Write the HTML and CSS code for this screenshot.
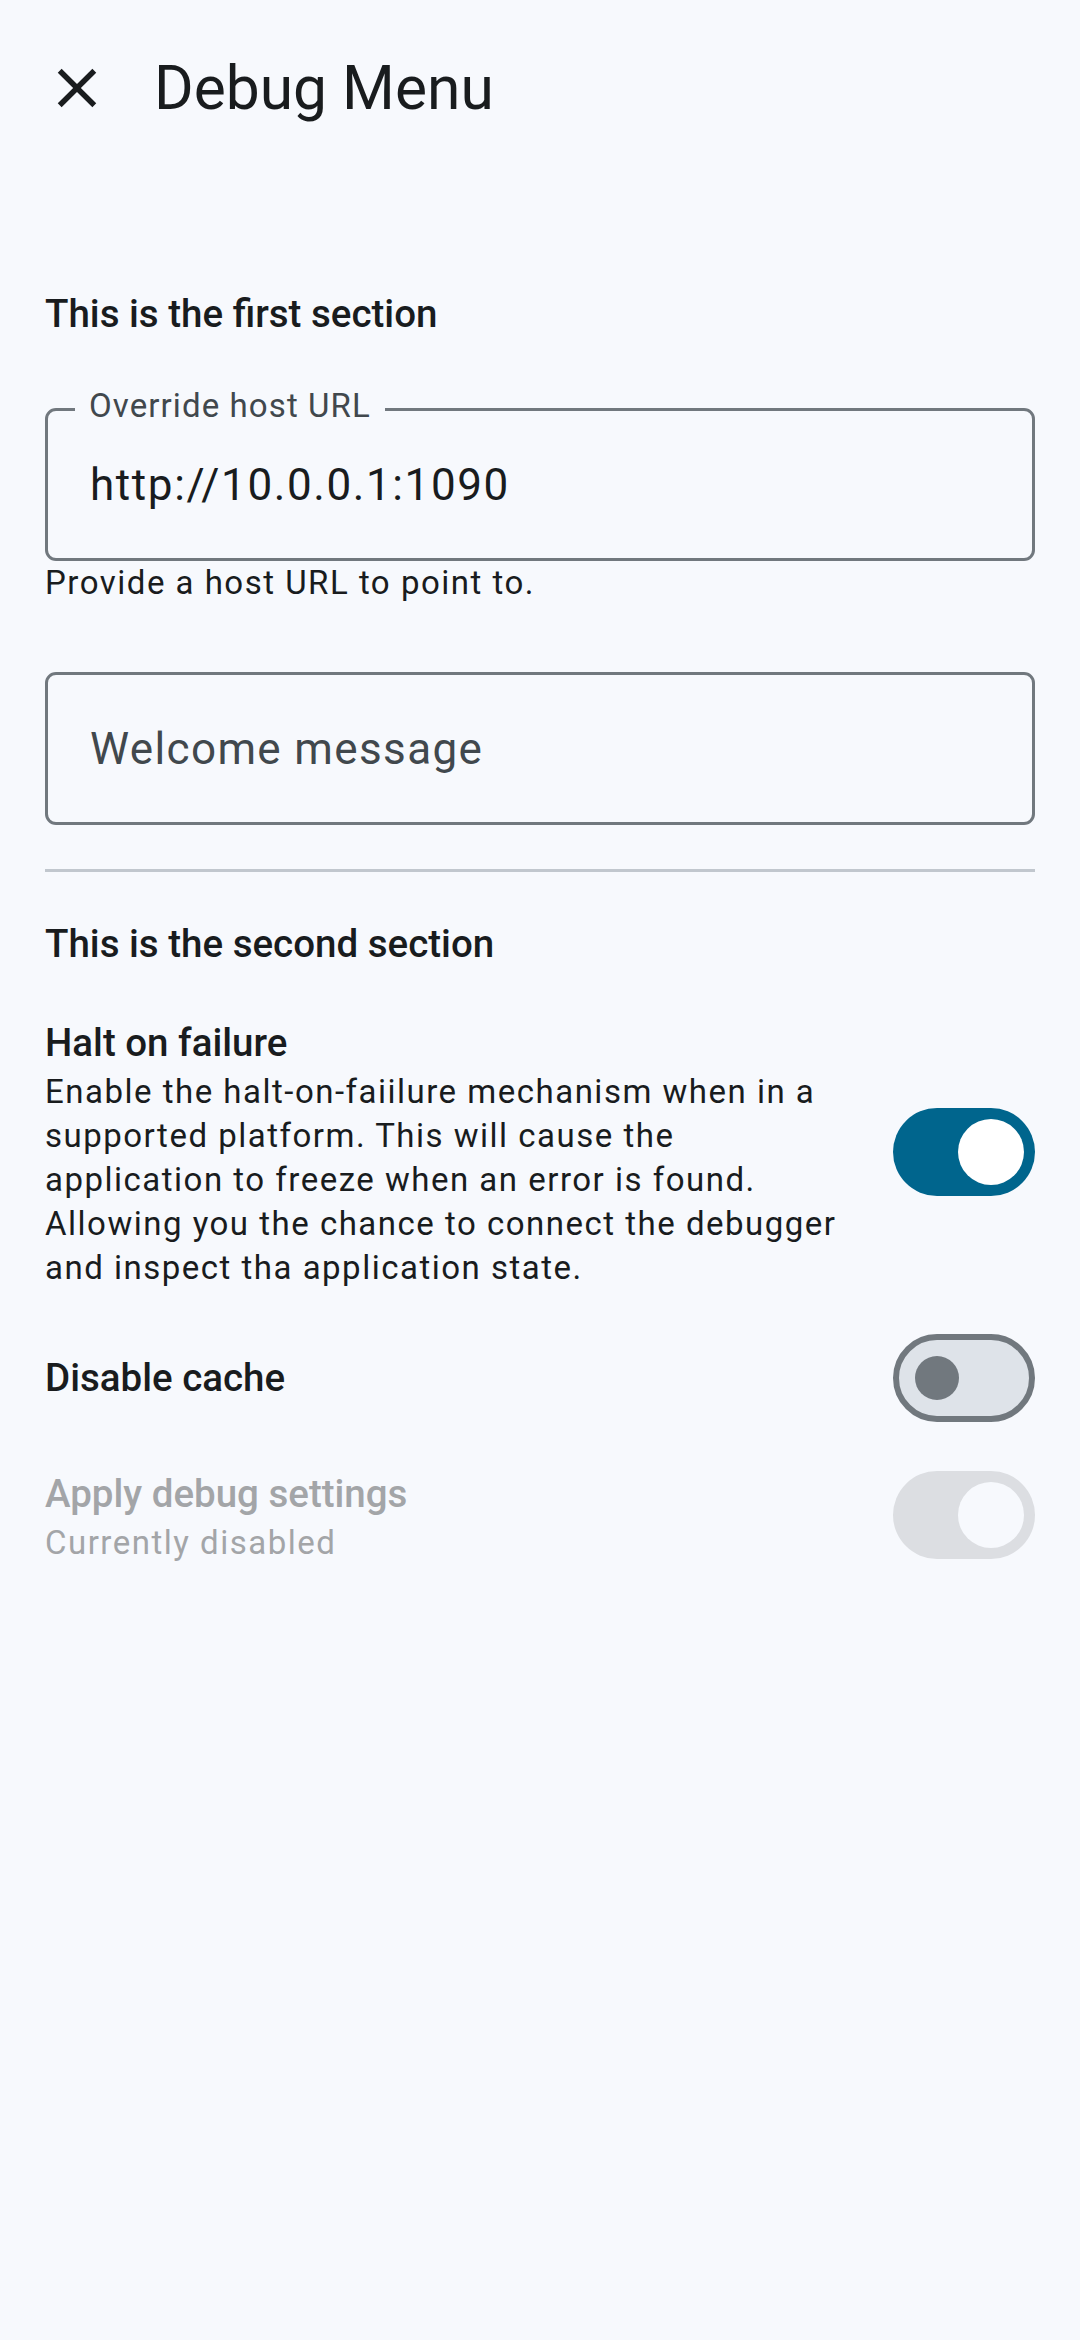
FILE: index.html
```html
<!DOCTYPE html>
<html lang="en">
<head>
<meta charset="utf-8">
<title>Debug Menu</title>
<link rel="stylesheet" href="styles.css">
</head>
<body>
<div class="screen">
  <header class="topbar">
    <button class="icon-btn" aria-label="Close">
      <svg viewBox="0 0 24 24" width="66" height="66"><path fill="#191c1e" d="M19 6.41L17.59 5 12 10.59 6.41 5 5 6.41 10.59 12 5 17.59 6.41 19 12 13.41 17.59 19 19 17.59 13.41 12z"/></svg>
    </button>
    <h1 class="title">Debug Menu</h1>
  </header>

  <main class="content">
    <h2 class="section-title first">This is the first section</h2>

    <div class="field-wrap first-field">
      <div class="field">
        <span class="field-label">Override host URL</span>
        <span class="field-value">http://10.0.0.1:1090</span>
      </div>
      <div class="helper">Provide a host URL to point to.</div>
    </div>

    <div class="field-wrap second-field">
      <div class="field">
        <span class="field-placeholder">Welcome message</span>
      </div>
    </div>

    <div class="divider"></div>

    <h2 class="section-title second">This is the second section</h2>

    <div class="rows">
      <div class="row">
        <div class="row-text">
          <div class="row-title">Halt on failure</div>
          <div class="row-desc">Enable the halt-on-faiilure mechanism when in a supported platform. This will cause the application to freeze when an error is found. Allowing you the chance to connect the debugger and inspect tha application state.</div>
        </div>
        <div class="switch on"><span class="thumb"></span></div>
      </div>

      <div class="row">
        <div class="row-text">
          <div class="row-title">Disable cache</div>
        </div>
        <div class="switch off"><span class="thumb"></span></div>
      </div>

      <div class="row disabled">
        <div class="row-text">
          <div class="row-title">Apply debug settings</div>
          <div class="row-desc">Currently disabled</div>
        </div>
        <div class="switch on-disabled"><span class="thumb"></span></div>
      </div>
    </div>
  </main>
</div>
</body>
</html>
```

FILE: styles.css
```css
html, body {
  margin: 0;
  padding: 0;
  background: #f7f9fd;
}

body {
  font-family: Roboto, "Noto Sans", "Liberation Sans", sans-serif;
  color: #191c1e;
}

.screen {
  width: 1080px;
  min-height: 2340px;
  background: #f7f9fd;
}

.topbar {
  height: 176px;
  display: flex;
  align-items: center;
  padding-left: 44px;
}

.icon-btn {
  width: 66px;
  height: 66px;
  padding: 0;
  margin: 0;
  border: none;
  background: transparent;
  display: flex;
  align-items: center;
  justify-content: center;
}

.icon-btn svg {
  display: block;
}

.title {
  margin: 0 0 0 44px;
  font-size: 60.5px;
  font-weight: 400;
  line-height: 77px;
  color: #191c1e;
}

.content {
  padding: 0 45px;
}

.section-title {
  margin: 0;
  font-size: 38.5px;
  font-weight: 500;
  line-height: 55px;
  letter-spacing: 0;
  color: #191c1e;
}

.section-title.first {
  margin-top: 110px;
}

.section-title.second {
  margin-top: 44px;
}

.field-wrap.first-field {
  margin-top: 67px;
}

.field-wrap.second-field {
  margin-top: 67px;
}

.field {
  position: relative;
  box-sizing: border-box;
  height: 153px;
  border: 3px solid #71787e;
  border-radius: 11px;
  display: flex;
  align-items: center;
  padding-left: 42px;
}

.field-label {
  position: absolute;
  top: -27px;
  left: 27px;
  padding: 0 14px;
  background: #f7f9fd;
  font-size: 33px;
  line-height: 44px;
  letter-spacing: 1.1px;
  color: #41484d;
}

.field-value,
.field-placeholder {
  font-size: 44px;
  line-height: 66px;
  letter-spacing: 1.6px;
}

.field-value {
  color: #191c1e;
}

.field-placeholder {
  color: #41484d;
  letter-spacing: 1.375px;
}

.helper {
  font-size: 33px;
  line-height: 44px;
  letter-spacing: 1.5px;
  color: #191c1e;
}

.divider {
  margin-top: 44px;
  height: 2.75px;
  background: #c1c7ce;
}

.rows {
  margin-top: 44px;
  display: flex;
  flex-direction: column;
  gap: 44px;
}

.row {
  display: flex;
  align-items: center;
  justify-content: space-between;
}

.row-text {
  width: 804px;
}

.row-title {
  font-size: 38.5px;
  font-weight: 500;
  line-height: 55px;
  letter-spacing: 0;
  color: #191c1e;
}

.row-desc {
  font-size: 33px;
  line-height: 44px;
  letter-spacing: 1.5px;
  color: #191c1e;
}

.row.disabled .row-title,
.row.disabled .row-desc {
  color: #a3a5a8;
}

.switch {
  box-sizing: border-box;
  width: 142px;
  height: 88px;
  border-radius: 44px;
  display: flex;
  align-items: center;
  flex-shrink: 0;
}

.thumb {
  display: block;
  border-radius: 50%;
}

.switch.on {
  background: #00658d;
  justify-content: flex-end;
  padding-right: 11px;
}

.switch.on .thumb {
  width: 66px;
  height: 66px;
  background: #ffffff;
}

.switch.off {
  background: #dee3e9;
  border: 6px solid #71787e;
  padding-left: 16px;
}

.switch.off .thumb {
  width: 44px;
  height: 44px;
  background: #71787e;
}

.switch.on-disabled {
  background: #dcdee2;
  justify-content: flex-end;
  padding-right: 11px;
}

.switch.on-disabled .thumb {
  width: 66px;
  height: 66px;
  background: #f7f9fd;
}
```
